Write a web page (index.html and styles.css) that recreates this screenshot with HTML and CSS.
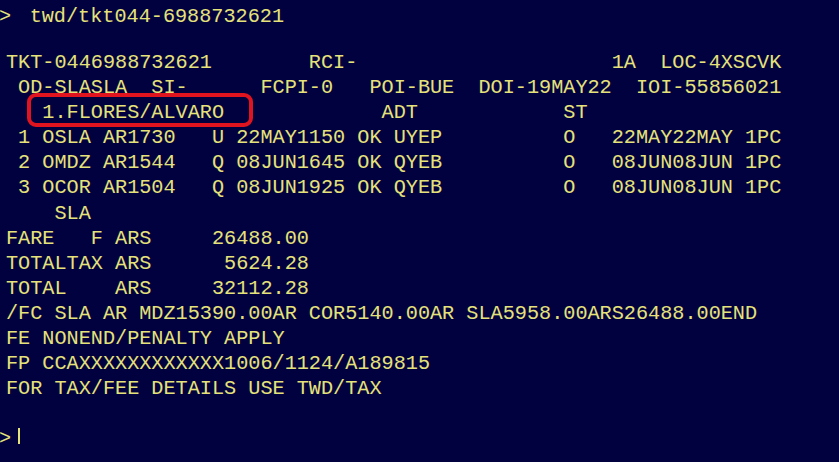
FILE: index.html
```html
<!DOCTYPE html>
<html lang="en">
<head>
<meta charset="utf-8">
<title>Terminal</title>
<link rel="stylesheet" href="styles.css">
</head>
<body>
<main class="screen">
<div class="cmdline"><span class="prompt">&gt;</span><span class="cmd">twd/tkt044-6988732621</span></div>
<pre class="output">TKT-0446988732621        RCI-                     1A  LOC-4XSCVK
 OD-SLASLA  SI-      FCPI-0   POI-BUE  DOI-19MAY22  IOI-55856021
   1.FLORES/ALVARO             ADT            ST
 1 OSLA AR1730   U 22MAY1150 OK UYEP          O   22MAY22MAY 1PC
 2 OMDZ AR1544   Q 08JUN1645 OK QYEB          O   08JUN08JUN 1PC
 3 OCOR AR1504   Q 08JUN1925 OK QYEB          O   08JUN08JUN 1PC
    SLA
FARE   F ARS     26488.00
TOTALTAX ARS      5624.28
TOTAL    ARS     32112.28
/FC SLA AR MDZ15390.00AR COR5140.00AR SLA5958.00ARS26488.00END
FE NONEND/PENALTY APPLY
FP CCAXXXXXXXXXXXX1006/1124/A189815
FOR TAX/FEE DETAILS USE TWD/TAX
</pre>
<span class="highlight" aria-hidden="true"></span>
<div class="cmdline last"><span class="prompt">&gt;</span><span class="cursor"></span></div>
</main>
</body>
</html>
```

FILE: styles.css
```css
html, body {
  margin: 0;
  padding: 0;
  background: #010140;
}

.screen {
  position: relative;
  width: 839px;
  height: 462px;
  overflow: hidden;
  background: #010140;
  color: #e6e27a;
  font-family: "Liberation Mono", "Courier New", monospace;
  font-size: 20.2px;
  line-height: 25.1px;
  padding: 4px 0 0 6px;
  box-sizing: border-box;
}

.cmdline {
  white-space: pre;
  height: 25.1px;
}

.prompt {
  margin-left: -7px;
}

.cmd {
  margin-left: 18.5px;
}

.output {
  margin: 20.9px 0 0 0;
  font: inherit;
  white-space: pre;
}

.last {
  margin-top: 25.1px;
}

.cursor {
  display: inline-block;
  width: 2px;
  height: 16px;
  margin-left: 7px;
  background: #e6e27a;
  vertical-align: baseline;
}

.highlight {
  position: absolute;
  left: 27px;
  top: 93px;
  width: 226px;
  height: 34px;
  box-sizing: border-box;
  border: 4px solid #e0141e;
  border-radius: 9px;
}
```
